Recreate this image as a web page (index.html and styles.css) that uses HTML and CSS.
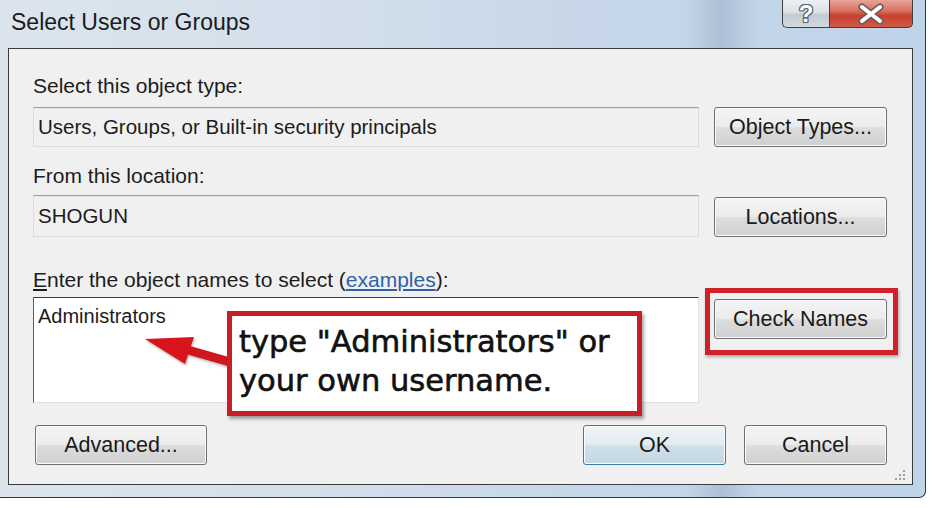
FILE: index.html
```html
<!DOCTYPE html>
<html>
<head>
<meta charset="utf-8">
<title>Select Users or Groups</title>
<link rel="stylesheet" href="styles.css">
</head>
<body>
<div class="window">
  <div class="titlebar">
    <div class="title">Select Users or Groups</div>
    <div class="caption-buttons">
      <div class="cap-btn help">?</div>
      <div class="cap-btn close">
        <svg width="28" height="22" viewBox="0 0 28 22">
          <path d="M5 4 L23 18 M23 4 L5 18" stroke="#6f5a57" stroke-width="7" stroke-linecap="round" fill="none"/>
          <path d="M5 4 L23 18 M23 4 L5 18" stroke="#ffffff" stroke-width="4" stroke-linecap="round" fill="none"/>
        </svg>
      </div>
    </div>
  </div>
  <div class="client">
    <div class="label">Select this object type:</div>
    <div class="row r1">
      <div class="textbox ro">Users, Groups, or Built-in security principals</div>
      <div class="btn">Object Types...</div>
    </div>
    <div class="label l2">From this location:</div>
    <div class="row r2">
      <div class="textbox ro tall">SHOGUN</div>
      <div class="btn mt2">Locations...</div>
    </div>
    <div class="label l3"><span class="ul">E</span>nter the object names to select (<span class="link">examples</span>):</div>
    <div class="row r3">
      <div class="textbox names">Administrators</div>
      <div class="btn-wrap">
        <div class="btn">Check Names</div>
        <span class="highlight"></span>
      </div>
      <svg class="arrow" width="240" height="100" viewBox="0 0 240 100">
        <path d="M155 53 L197 65" stroke="#d0161f" stroke-width="9" fill="none"/>
        <polygon points="112,42 161,40 152,67" fill="#d8141d"/>
      </svg>
      <div class="callout">type "Administrators" or<br>your own username.</div>
    </div>
    <div class="footer">
      <div class="btn adv">Advanced...</div>
      <div class="footer-right">
        <div class="btn ok">OK</div>
        <div class="btn cancel">Cancel</div>
      </div>
    </div>
    <svg class="grip" width="14" height="14" viewBox="0 0 14 14">
      <g fill="#9aa0a6">
        <rect x="11" y="2" width="2" height="2"/>
        <rect x="11" y="6" width="2" height="2"/>
        <rect x="7" y="6" width="2" height="2"/>
        <rect x="11" y="10" width="2" height="2"/>
        <rect x="7" y="10" width="2" height="2"/>
        <rect x="3" y="10" width="2" height="2"/>
      </g>
    </svg>
  </div>
</div>
</body>
</html>
```

FILE: styles.css
```css
body {
  margin: 0;
  background: #ffffff;
  font-family: "Liberation Sans", Arial, sans-serif;
}

.window {
  width: 926px;
  height: 498px;
  box-sizing: border-box;
  padding: 0 12px 12px 8px;
  border-right: 1px solid #2c3b4b;
  border-bottom: 1px solid #2c3b4b;
  border-bottom-right-radius: 7px;
  background:
    linear-gradient(90deg, rgba(255,255,255,0) 0%, rgba(255,255,255,0) 74%, rgba(110,135,160,0.28) 78%, rgba(255,255,255,0) 82%),
    linear-gradient(90deg, #dce5ee 0%, #d3dfeb 35%, #c8d8e9 60%, #bfd3e9 100%);
  display: flex;
  flex-direction: column;
  position: relative;
}

.titlebar {
  height: 48px;
  flex-shrink: 0;
  display: flex;
  justify-content: space-between;
  align-items: flex-start;
}

.title {
  font-size: 23px;
  line-height: 28px;
  padding-top: 8px;
  margin-left: 3px;
  color: #1b1b1b;
}

.caption-buttons {
  display: flex;
  height: 28px;
}

.cap-btn {
  height: 28px;
  box-sizing: border-box;
  border: 1px solid #3f3f3f;
  border-top: none;
  display: flex;
  align-items: center;
  justify-content: center;
}

.help {
  width: 47px;
  border-right: none;
  border-bottom-left-radius: 5px;
  background: linear-gradient(#eef1f4, #dce1e6 45%, #c2cad2 55%, #d3d9df);
  color: #ffffff;
  font-weight: bold;
  font-size: 24px;
  line-height: 26px;
  text-shadow: 1px 0 0 #5b6168, -1px 0 0 #5b6168, 0 1px 0 #5b6168, 0 -1px 0 #5b6168, 1px 1px 0 #5b6168, -1px -1px 0 #5b6168, 1px -1px 0 #5b6168, -1px 1px 0 #5b6168;
}

.close {
  width: 84px;
  border-bottom-right-radius: 5px;
  background: linear-gradient(#e5a497, #d87062 40%, #c6402f 58%, #d25a47);
}

.client {
  flex: 1;
  box-sizing: border-box;
  border: 1px solid #3c3c3c;
  background: #f0f0f0;
  padding: 25px 25px 0 24px;
  position: relative;
  color: #1c1c1c;
  font-size: 21px;
}

.label {
  line-height: 24px;
}

.l2 { margin-top: 17px; }
.l3 { margin-top: 31px; }

.ul { text-decoration: underline; }

.link {
  color: #2f62a6;
  text-decoration: underline;
}

.row {
  display: flex;
  gap: 15px;
  align-items: flex-start;
}

.r1 { margin-top: 9px; }
.r2 { margin-top: 7px; }
.r3 { margin-top: 5px; position: relative; }

.textbox {
  width: 666px;
  box-sizing: border-box;
  display: flex;
  align-items: center;
  padding-left: 4px;
  line-height: 24px;
  font-size: 20.5px;
}

.ro {
  height: 40px;
  background: #f0f0f0;
  border: 1px solid #dcdcdc;
  border-top-color: #9e9e9e;
  box-shadow: inset 0 1px 0 #e4e4e4;
}

.tall { height: 42px; }

.names {
  height: 106px;
  align-items: flex-start;
  padding-top: 6px;
  font-size: 20px;
  background: #ffffff;
  border: 1px solid #e2e2e2;
  border-top-color: #3e3e3e;
  border-left-color: #5e5e5e;
}

.btn {
  width: 173px;
  height: 40px;
  box-sizing: border-box;
  border: 1px solid #707070;
  border-radius: 3px;
  background: linear-gradient(#f4f4f4, #ececec 48%, #dddddd 52%, #cfcfcf);
  box-shadow: inset 0 0 0 1px #fbfbfb;
  display: flex;
  align-items: center;
  justify-content: center;
  font-size: 21.5px;
  color: #1a1a1a;
}

.mt2 { margin-top: 2px; }

.btn-wrap {
  position: relative;
  margin-top: 2px;
}

.highlight {
  position: absolute;
  left: -9px;
  top: -11px;
  width: 193px;
  height: 67px;
  box-sizing: border-box;
  border: 5px solid #d0212b;
  box-shadow: 1px 2px 3px rgba(0,0,0,0.3);
}

.arrow {
  position: absolute;
  left: 0;
  top: 0;
  overflow: visible;
  filter: drop-shadow(1px 2px 1px rgba(0,0,0,0.25));
}

.callout {
  position: absolute;
  left: 194px;
  top: 14px;
  width: 415px;
  height: 105px;
  box-sizing: border-box;
  border: 5px solid #c81e28;
  background: #ffffff;
  box-shadow: 2px 3px 3px rgba(0,0,0,0.35);
  font-family: "DejaVu Sans", Verdana, sans-serif;
  font-size: 30.5px;
  line-height: 39px;
  padding: 6px 0 0 7px;
  color: #111111;
  -webkit-text-stroke: 0.6px #111111;
  white-space: nowrap;
}

.footer {
  margin-top: 22px;
  display: flex;
  justify-content: space-between;
}

.adv {
  width: 172px;
  margin-left: 2px;
}

.footer-right {
  display: flex;
  gap: 18px;
}

.ok, .cancel { width: 143px; }

.ok {
  border-color: #3d7c9a;
  background: linear-gradient(#eef4f8, #e2ecf2 48%, #d0e0ea 52%, #c3d7e3);
}

.grip {
  position: absolute;
  right: 6px;
  bottom: 2px;
}
```
